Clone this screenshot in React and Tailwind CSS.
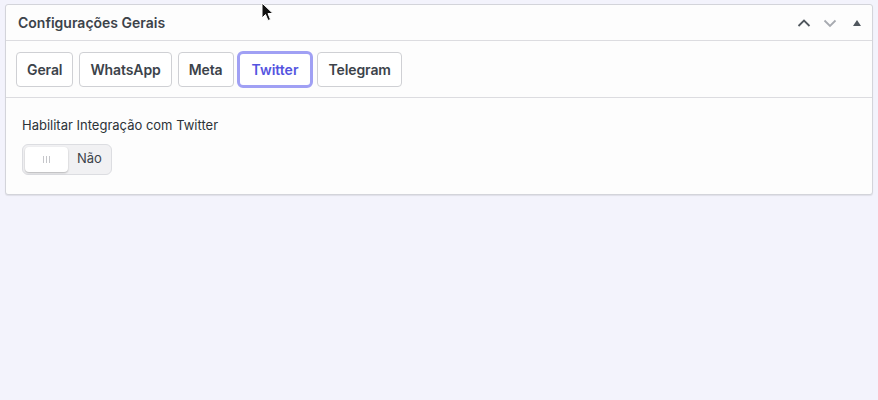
import React, { useState } from "react";

const tabs = ["Geral", "WhatsApp", "Meta", "Twitter", "Telegram"];

export default function App() {
  const [active, setActive] = useState("Twitter");
  const [enabled, setEnabled] = useState(false);

  return (
    <div
      className="relative min-h-[400px] w-full bg-[#f3f3fc] px-[5px] pt-[4px]"
      style={{ fontFamily: "Inter, 'Noto Sans', sans-serif" }}
    >
      {/* Panel */}
      <div className="rounded-[3px] border border-[#d3d4da] bg-[#fdfdfd] shadow-[0_1px_1px_rgba(0,0,0,0.08)]">
        {/* Header */}
        <div className="flex h-[36px] items-center justify-between border-b border-[#dcdce0] pl-[12px] pr-[8px]">
          <h2 className="text-[14px] font-semibold text-[#3c434a]">
            Configurações Gerais
          </h2>
          <div className="flex items-center gap-[10px] text-[#50575e]">
            <svg width="16" height="16" viewBox="0 0 16 16" fill="none">
              <path d="M2.5 11 L8 5.5 L13.5 11" stroke="#50575e" strokeWidth="1.8" />
            </svg>
            <svg width="16" height="16" viewBox="0 0 16 16" fill="none">
              <path d="M2.5 5.5 L8 11 L13.5 5.5" stroke="#a7aab0" strokeWidth="1.8" />
            </svg>
            <svg width="14" height="14" viewBox="0 0 14 14" className="ml-[2px]">
              <path d="M3 10 L7 4 L11 10 Z" fill="#50575e" />
            </svg>
          </div>
        </div>

        {/* Tabs */}
        <div className="flex items-center gap-[6px] border-b border-[#dcdce0] px-[10px] pb-[9px] pt-[10px]">
          {tabs.map((t) =>
            t === active ? (
              <button
                key={t}
                onClick={() => setActive(t)}
                className="-ml-[3px] -mr-[2px] h-[37px] rounded-[6px] border-[3px] border-[#a0a0f4] bg-white px-[12px] text-[14px] font-semibold text-[#5454e0]"
              >
                {t}
              </button>
            ) : (
              <button
                key={t}
                onClick={() => setActive(t)}
                className="h-[35px] rounded-[4px] border border-[#cfd0d4] bg-white px-[10px] text-[14px] font-semibold tracking-[-0.1px] text-[#3c434a]"
              >
                {t}
              </button>
            )
          )}
        </div>

        {/* Content */}
        <div className="px-[16px] pb-[19px] pt-[18px]">
          <p className="text-[13px] text-[#2c3338]">
            Habilitar Integração com Twitter
          </p>
          <button
            onClick={() => setEnabled(!enabled)}
            className="mt-[8px] flex h-[31px] w-[90px] items-center rounded-[6px] border border-[#dcdde1] bg-[#f1f1f3] p-[2px]"
          >
            <span className="flex h-[25px] w-[43px] items-center justify-center rounded-[4px] bg-white shadow-[0_1px_2px_rgba(0,0,0,0.25)]">
              <span className="flex gap-[2px]">
                <span className="h-[7px] w-px bg-[#c5c6ca]" />
                <span className="h-[7px] w-px bg-[#c5c6ca]" />
                <span className="h-[7px] w-px bg-[#c5c6ca]" />
              </span>
            </span>
            <span className="ml-[9px] text-[13px] text-[#3c434a]">
              {enabled ? "Sim" : "Não"}
            </span>
          </button>
        </div>
      </div>

      {/* Mouse cursor */}
      <svg
        className="absolute left-[261px] top-[2px]"
        width="13"
        height="20"
        viewBox="0 0 13 20"
      >
        <path
          d="M1 1 L1 16 L4.5 12.5 L7 18.5 L9.5 17.5 L7 11.5 L12 11.5 Z"
          fill="#111"
          stroke="#fff"
          strokeWidth="1"
        />
      </svg>
    </div>
  );
}
